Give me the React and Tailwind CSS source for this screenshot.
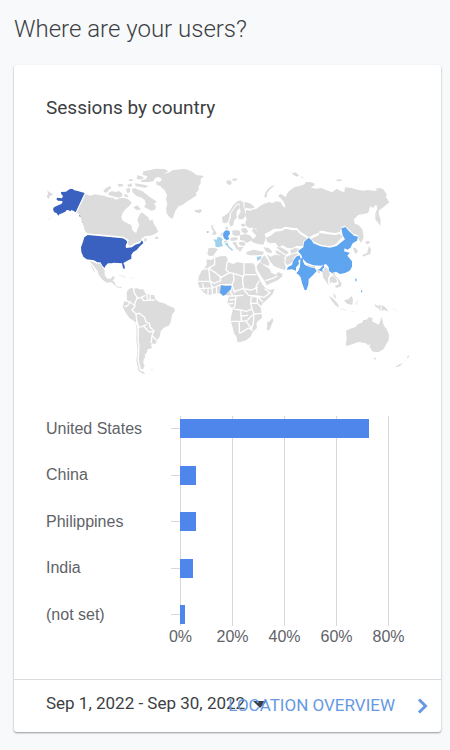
const sessions = [
  { country: "United States", value: 72.5 },
  { country: "China", value: 6 },
  { country: "Philippines", value: 6 },
  { country: "India", value: 5 },
  { country: "(not set)", value: 2 },
];

const ticks = [0, 20, 40, 60, 80];
const MAX = 80;

const GREY = "#dcdcdc";
const NAVY = "#3a61bf";
const BLUE = "#5ea4ee";
const SKY = "#9fd2ea";

// Each region has its own origin, shapes are [fill, path]
const regions = [
  {
    name: "north-america",
    origin: "translate(-18 -15)",
    shapes: [
      [NAVY, "M63 96 78 95 86 89 92 86 100 88 102 91 110 92 134 99 107 157 100 152 94 150 91 154 86 151 80 150 76 155 66 160 58 163 55 167 50 160 42 156 39 148 42 142 56 135 64 132 68 126 66 123 54 122 49 118 52 113 66 115 69 108 64 103Z"],
      [NAVY, "M118 165 122 165 123 170 119 170ZM126 182 129 183 130 190 127 188Z"],
      [NAVY, "M143 225 200 230 248 235 258 240 262 246 257 256 258 264 276 262 286 254 300 250 306 241 310 249 298 260 290 270 280 276 274 284 274 296 262 302 250 309 254 318 254 327 249 325 246 310 232 309 222 308 215 310 204 310 196 318 194 324 188 318 181 307 172 307 162 301 140 298 130 290 124 276 123 262 128 248 133 232Z"],
      [GREY, "M137 102 150 107 165 103 180 106 192 107 205 112 220 114 228 119 240 114 252 114 262 116 270 122 275 128 268 138 258 146 248 158 244 172 248 182 262 190 274 195 276 208 282 216 289 218 292 208 298 195 292 180 298 165 305 157 312 162 325 172 329 183 337 178 342 192 350 205 355 215 345 222 330 227 316 228 304 236 302 243 285 249 268 258 263 250 266 240 250 230 200 225 141 220 134 212 130 195 125 182 120 165 110 158Z"],
      [GREY, "M312 236 320 234 319 244 314 246ZM344 234 350 229 357 235 348 238ZM22 90 27 96 34 99 39 104 30 108 26 117 20 110 24 102Z"],
      [GREY, "M190 92 198 84 210 78 214 84 207 90 200 98 193 97ZM206 98 216 93 228 97 236 93 246 99 247 108 238 113 224 110 212 107 204 103ZM258 86 270 84 270 96 262 100ZM233 71 247 72 250 78 236 80ZM252 102 262 104 266 112 254 110Z"],
      [GREY, "M275 88 284 84 296 90 308 94 318 102 330 112 345 121 351 127 342 130 348 140 345 149 335 152 322 146 312 140 318 132 314 120 302 112 290 108 280 100ZM280 142 292 136 303 148 290 151ZM262 74 275 70 276 80 264 80ZM284 70 312 74 325 78 316 83 288 79Z"],
      [GREY, "M310 34 330 30 350 26 375 28 385 34 370 42 358 49 345 55 340 64 320 67 303 66 304 60 318 58 322 49 308 44ZM292 46 303 48 312 55 298 59 290 55ZM268 57 282 59 276 64 266 62Z"],
      [GREY, "M148 304 162 306 170 311 180 310 190 323 194 331 194 345 202 356 212 356 218 349 225 350 220 360 212 366 200 368 186 358 177 346 173 334 164 322 154 310ZM150 310 158 322 167 338 160 332Z"],
      ["#f3f3f3", "M42 166 20 182 30 180ZM232 345 260 356 250 346Z"],
    ],
  },
  {
    name: "south-america",
    origin: "translate(162 285)",
    shapes: [
      [GREY, "M22 61 34 60 44 66 46 76 54 80 65 80 64 84 50 82 38 70Z"],
      [GREY, "M80 96 87 87 96 83 100 88 110 84 118 88 130 88 137 101 150 104 162 105 167 119 178 126 192 130 208 138 222 144 225 152 216 164 213 182 208 196 192 203 182 214 180 228 172 240 166 253 157 250 153 256 156 264 143 268 140 278 134 284 136 292 131 298 130 310 134 316 130 326 120 330 112 318 109 300 113 270 109 240 110 208 106 186 88 174 76 156 68 140 72 126 81 120Z"],
      [GREY, "M112 322 122 333 130 335 136 343 126 340 114 331Z"],
      ["#f1f1f1", "M60 43 78 48 74 50ZM90 52 106 54 98 57ZM150 328 164 328 156 332Z"],
    ],
    borders:
      "M100 86 104 102 112 112 108 124M108 116 124 112 136 106M124 110 130 122 164 120M140 100 142 120M150 102V120M106 122 104 140 96 150 108 162 118 160 134 172 138 186 148 190 150 202 162 212 156 226 170 242M108 162 110 182 116 202 126 200 140 194M108 186 115 206 114 240 117 262 114 300 122 332M132 200 148 216 162 214M72 140 82 138 90 126 76 122M90 126 106 138M156 228 153 250",
  },
  {
    name: "europe",
    origin: "translate(312 -15)",
    shapes: [
      [GREY, "M18 64 30 66 36 57 20 48 36 42 56 38 68 31 90 28 106 27 124 34 140 45 162 48 152 57 152 70 146 79 146 90 138 98 140 106 128 114 112 124 98 134 86 139 76 152 72 165 68 176 58 172 50 160 48 145 52 132 48 118 51 106 45 92 30 78 20 74Z"],
      [GREY, "M0 32 20 27 46 28 34 36 14 46 0 52ZM133 149 142 150 152 147 156 153 148 160 136 156ZM228 64 240 60 246 68 240 76 232 72ZM246 57 259 55 262 60 250 64Z"],
      [GREY, "M216 172 230 163 238 155 250 135 262 124 275 121 272 130 260 132 250 145 240 160 236 182 228 190 218 188Z"],
      [GREY, "M262 134 268 134 270 144 261 152 259 164 261 172 252 182 250 195 242 201 237 188 242 174 243 160 254 144Z"],
      [GREY, "M269 128 279 124 281 140 285 156 287 168 278 178 266 178 264 168 272 156 270 144ZM283 126 300 130 313 140 303 146 290 144 284 146Z"],
      [GREY, "M184 195 190 196 188 202 194 210 200 220 196 225 186 224 190 214 184 206ZM176 264 190 263 204 267 196 278 190 287 178 288 172 282Z"],
      [GREY, "M246 212 257 210 270 213 271 224 262 229 248 225ZM273 206 286 203 295 214 288 221 276 217ZM272 192 285 191 286 199 276 200ZM270 226 285 222 300 226 309 236 300 244 290 249 282 242 270 240ZM268 246 283 245 287 255 275 258 266 252ZM242 233 256 231 265 236 257 242 241 242ZM247 246 258 246 262 256 267 264 261 271 254 258ZM268 261 282 260 276 266 270 276 264 268ZM225 203 232 199 235 206 228 210ZM213 220 219 218 217 226 211 228ZM221 243 232 241 232 246 222 248Z"],
      [SKY, "M170 214 176 213 176 218 171 220ZM190 238 200 239 203 231 210 231 218 237 215 246 219 258 206 262 196 260 196 248ZM223 251 233 248 236 258 250 270 246 272 236 264 229 256Z"],
      [BLUE, "M221 216 228 211 238 212 240 222 234 229 238 237 230 241 222 235 219 226Z"],
    ],
  },
  {
    name: "asia",
    origin: "translate(612 -15)",
    shapes: [
      [GREY, "M0 152-12 150-14 166-10 176-14 188-12 198-2 204 6 203 18 207 24 218 36 226 46 233 44 222 60 214 72 206 94 206 105 200 130 204 141 204 152 216 166 224 178 232 190 224 205 219 210 212 222 213 236 217 255 219 270 216 274 202 284 197 296 208 310 221 324 226 327 240 334 248 341 232 337 208 326 196 313 190 312 178 325 165 340 162 354 159 357 152 360 139 368 144 379 134 382 146 376 160 376 178 384 188 391 197 392 180 387 165 386 152 400 142 418 127 407 110 411 104 400 88 390 84 376 86 382 92 372 92 350 90 342 92 325 90 305 84 285 82 283 97 270 92 260 86 246 97 234 92 215 84 200 86 182 83 195 74 192 70 180 66 168 66 163 73 150 78 135 80 118 92 112 100 107 112 100 106 90 101 85 108 94 117 104 130 106 143 98 138 92 126 78 124 66 130 58 126 40 132 30 138 20 146Z"],
      [GREY, "M10 203 24 216 48 231 44 244 40 254 24 252 6 246 4 240 16 232 18 226 6 214Z"],
      [GREY, "M125 41 136 37 148 46 140 50ZM153 49 161 52 156 54ZM258 59 274 58 275 63 262 64ZM42 112 46 98 54 86 66 77 75 76 62 86 52 98 50 112ZM0 134 10 138 14 145 0 144Z"],
      [GREY, "M48 234 64 226 76 215 96 212 106 206 128 211 140 210 150 222 164 230 172 238 160 244 158 258 140 258 126 265 112 264 98 256 86 262 76 248 60 250 50 244Z"],
      [GREY, "M182 237 194 231 206 226 208 219 234 223 254 225 269 222 278 230 268 240 258 252 240 259 215 255 198 248Z"],
      [GREY, "M78 262 92 262 104 268 116 276 110 284 100 278 88 270ZM76 270 90 276 108 288 102 294 88 284 80 282ZM120 272 134 264 147 266 138 277 124 281Z"],
      [GREY, "M50 282 62 290 76 284 94 287 104 296 103 310 108 322 104 330 86 324 72 318 60 304ZM108 292 122 284 140 280 144 284 132 292 128 306 112 316 106 308ZM40 262 56 264 66 274 64 280 50 276Z"],
      [BLUE, "M176 233 186 242 190 250 212 259 240 263 260 258 272 248 285 238 278 226 274 205 286 201 296 212 312 227 324 230 321 242 308 250 301 264 292 269 284 265 282 274 299 278 292 287 306 304 306 320 299 332 285 339 270 342 258 335 246 340 237 333 236 322 228 312 213 317 190 316 170 308 158 296 154 286 144 273 160 262 162 246Z"],
      [BLUE, "M138 290 149 286 152 296 145 302 147 312 138 322 138 332 126 328 110 329 114 321 126 315 130 302Z"],
      [GREY, "M309 264 317 263 324 274 317 282 312 274ZM345 246 355 242 361 248 350 253ZM357 258 363 267 361 282 350 286 338 290 338 284 351 280Z"],
    ],
  },
  {
    name: "africa",
    origin: "translate(402 225)",
    shapes: [
      [GREY, "M80 58 94 60 104 53 120 49 137 48 143 56 142 66 160 72 172 66 190 70 220 70 226 82 226 92 236 112 246 132 256 144 268 150 284 147 278 162 264 176 250 188 242 200 245 222 246 234 233 244 229 252 231 264 218 276 212 290 198 301 180 307 172 305 170 292 162 280 158 262 152 244 154 226 158 214 154 202 142 190 144 178 149 168 140 164 128 168 118 160 108 160 98 163 84 166 72 158 60 146 54 130 56 110 64 94 74 84 80 74Z"],
      [GREY, "M277 234 280 241 272 262 266 272 260 268 262 256 261 248 270 242Z"],
      [GREY, "M200 36 220 29 236 32 252 36 248 44 230 46 208 46 198 42ZM245 54 254 46 262 58 268 70 266 78 256 74 246 70 241 64Z"],
      [GREY, "M230 78 240 66 254 77 268 86 274 98 288 104 294 96 308 102 306 110 294 120 276 128 260 136 254 124 242 106 232 90Z"],
      [SKY, "M230 51 245 48 241 58 232 63Z"],
    ],
    borders:
      "M104 52 104 74 84 86 70 88M84 84 106 98M142 64 138 90 148 98 162 100M106 98 124 112 148 98M86 86 90 124 52 124M90 124 104 130 122 122 120 110M192 68 192 104M192 104H230M160 100 190 110 192 104M160 102 162 120 156 134 164 158M188 108 188 130 192 148M164 154 188 146 214 150 234 142M238 122 228 140 232 160M118 134H158M90 124 98 144 60 146M98 144 122 134M97 146V166M110 142V162M84 148V168M68 130 72 152M156 138 151 156 160 168 190 166M148 168 164 168M192 150 206 166 232 168 232 190 214 190M168 170 164 200 154 208M214 170 212 190 216 208M154 206 182 210 200 214 216 206M216 170H232M232 168 248 186M254 146 270 158 252 172 232 168M232 190 244 202M216 208 222 222 246 220M182 210 184 242M150 244 184 244 202 242M184 228 204 226M202 242 210 232 222 222M222 222 220 250 214 268M178 244V280M198 244 214 264M178 280 190 274 206 264 218 272M148 180 164 178M142 192 160 190M256 122 276 116 292 108",
    over: [[BLUE, "M123 136 138 138 155 137 153 148 144 155 138 163 130 167 120 158Z"]],
  },
  {
    name: "oceania",
    origin: "translate(672 165)",
    shapes: [
      [BLUE, "M91 116 98 112 99 124 104 134 120 142 134 144 140 153 130 164 116 178 115 194 109 211 104 210 97 192 92 172 86 164 79 160 85 152 90 140ZM144 149 150 146 161 134 163 142 157 148 158 156 150 152Z"],
      [BLUE, "M256 175 260 178 259 185 256 182ZM274 210 277 213 276 218 273 215Z"],
      [GREY, "M108 132 124 138 136 139 134 143 118 140ZM140 148 148 151 151 160 144 159ZM164 144 168 140 176 152 180 164 174 174 175 196 168 184 160 174 157 160Z"],
      [GREY, "M179 174 188 167 196 174 202 184 194 190 184 186 180 192ZM186 158 196 156 194 164 206 178 215 190 212 200 198 204 195 197 207 192 202 178 192 168ZM190 220 196 226 198 236 192 232ZM177 227 190 236 204 252 207 264 196 256 186 243ZM222 241 235 238 244 228 249 238 247 254 232 252Z"],
      [GREY, "M314 252 324 258 332 254 332 272 324 264 316 260ZM335 255 346 261 355 275 343 270 335 272Z"],
      [GREY, "M228 332 240 326 256 322 264 312 276 308 280 300 290 299 296 292 308 294 306 304 318 310 326 314 331 302 333 290 338 302 341 316 350 328 357 344 356 360 348 374 340 388 326 396 316 396 306 394 302 384 298 382 301 372 294 376 288 370 266 366 248 372 232 378 227 374 230 356Z"],
      [GREY, "M311 414 320 415 314 420ZM375 442 388 433 400 429 386 440ZM411 412 416 405 417 411 413 415Z"],
      ["#f0f0f0", "M210 264 230 269 228 272 211 268ZM256 248 266 238 260 258ZM240 274 256 273 248 277ZM362 262 374 266 392 280 376 270ZM116 208 120 212 118 218Z"],
    ],
  },
];

const WorldMap = () => {
  return (
    <svg
      viewBox="0 0 1089 636"
      className="w-full h-auto block"
      role="img"
      aria-label="Sessions by country"
    >
      {regions.map((region) => (
        <g key={region.name} transform={region.origin}>
          {region.shapes.map(([fill, d]) => (
            <path key={d} d={d} fill={fill} />
          ))}
          {region.borders && (
            <path d={region.borders} fill="none" stroke="#fff" strokeWidth="4" />
          )}
          {region.over?.map(([fill, d]) => (
            <path key={d} d={d} fill={fill} />
          ))}
        </g>
      ))}
    </svg>
  );
};

const BarChart = () => {
  return (
    <div className="font-['Liberation_Sans',sans-serif] text-base leading-5 text-[#5f6368]">
      <div className="grid h-[210px]">
        {/* Grid lines */}
        <div className="col-start-1 row-start-1 flex justify-between ml-[134px] mr-5">
          {ticks.map((tick) => (
            <div key={tick} className="w-px bg-[#d6d8dd]" />
          ))}
        </div>

        {/* Bars */}
        <ul className="col-start-1 row-start-1 flex flex-col justify-between pt-[3px] pb-[2px]">
          {sessions.map((item) => (
            <li key={item.country} className="flex items-center h-[19px]">
              <span className="w-[125px]">{item.country}</span>
              <span className="w-[9px] h-px bg-[#d6d8dd]" />
              <span className="flex-1 h-full mr-5">
                <span
                  className="block h-full bg-[#4f86ec]"
                  style={{ width: `${(item.value / MAX) * 100}%` }}
                />
              </span>
            </li>
          ))}
        </ul>
      </div>

      <div className="flex justify-between ml-[134px] mr-5 pt-px">
        {ticks.map((tick) => (
          <span key={tick} className="w-px flex justify-center">
            {tick}%
          </span>
        ))}
      </div>
    </div>
  );
};

export default function App() {
  return (
    <main className="min-h-screen bg-[#f8f9fb] pl-[14px] pr-[9px] pt-[11px] pb-4 font-[Roboto,sans-serif]">
      <h1 className="text-2xl leading-9 font-light text-[#3c4043]">
        Where are your users?
      </h1>

      <section className="mt-[18px] bg-white rounded-[3px] shadow-[0_1px_2px_rgba(0,0,0,0.4)]">
        <div className="px-8 pt-[31px] pb-8">
          <h2 className="text-[19px] leading-6 text-[#3c4043]">
            Sessions by country
          </h2>
          <div className="mt-[45px] mb-[39px]">
            <WorldMap />
          </div>
          <BarChart />
        </div>

        <footer className="grid items-center h-[53px] border-t border-[#dadce0] pl-8 pr-3">
          <button className="col-start-1 row-start-1 justify-self-start flex items-center gap-2 pb-1 text-[17px] text-[#3c4043] whitespace-nowrap">
            Sep 1, 2022 - Sep 30, 2022
            <svg viewBox="0 0 14 7" className="w-[14px] h-[7px]" fill="currentColor" aria-hidden="true">
              <path d="M0 0h14L7 7Z" />
            </svg>
          </button>
          <a
            href="#location"
            className="col-start-1 row-start-1 justify-self-end flex items-center gap-[22px] text-[17px] text-[#6699e2] whitespace-nowrap"
          >
            LOCATION OVERVIEW
            <svg viewBox="0 0 12 16" className="w-3 h-4" fill="none" aria-hidden="true">
              <path d="M2 1.5 8.5 8 2 14.5" stroke="currentColor" strokeWidth="3" />
            </svg>
          </a>
        </footer>
      </section>
    </main>
  );
}
